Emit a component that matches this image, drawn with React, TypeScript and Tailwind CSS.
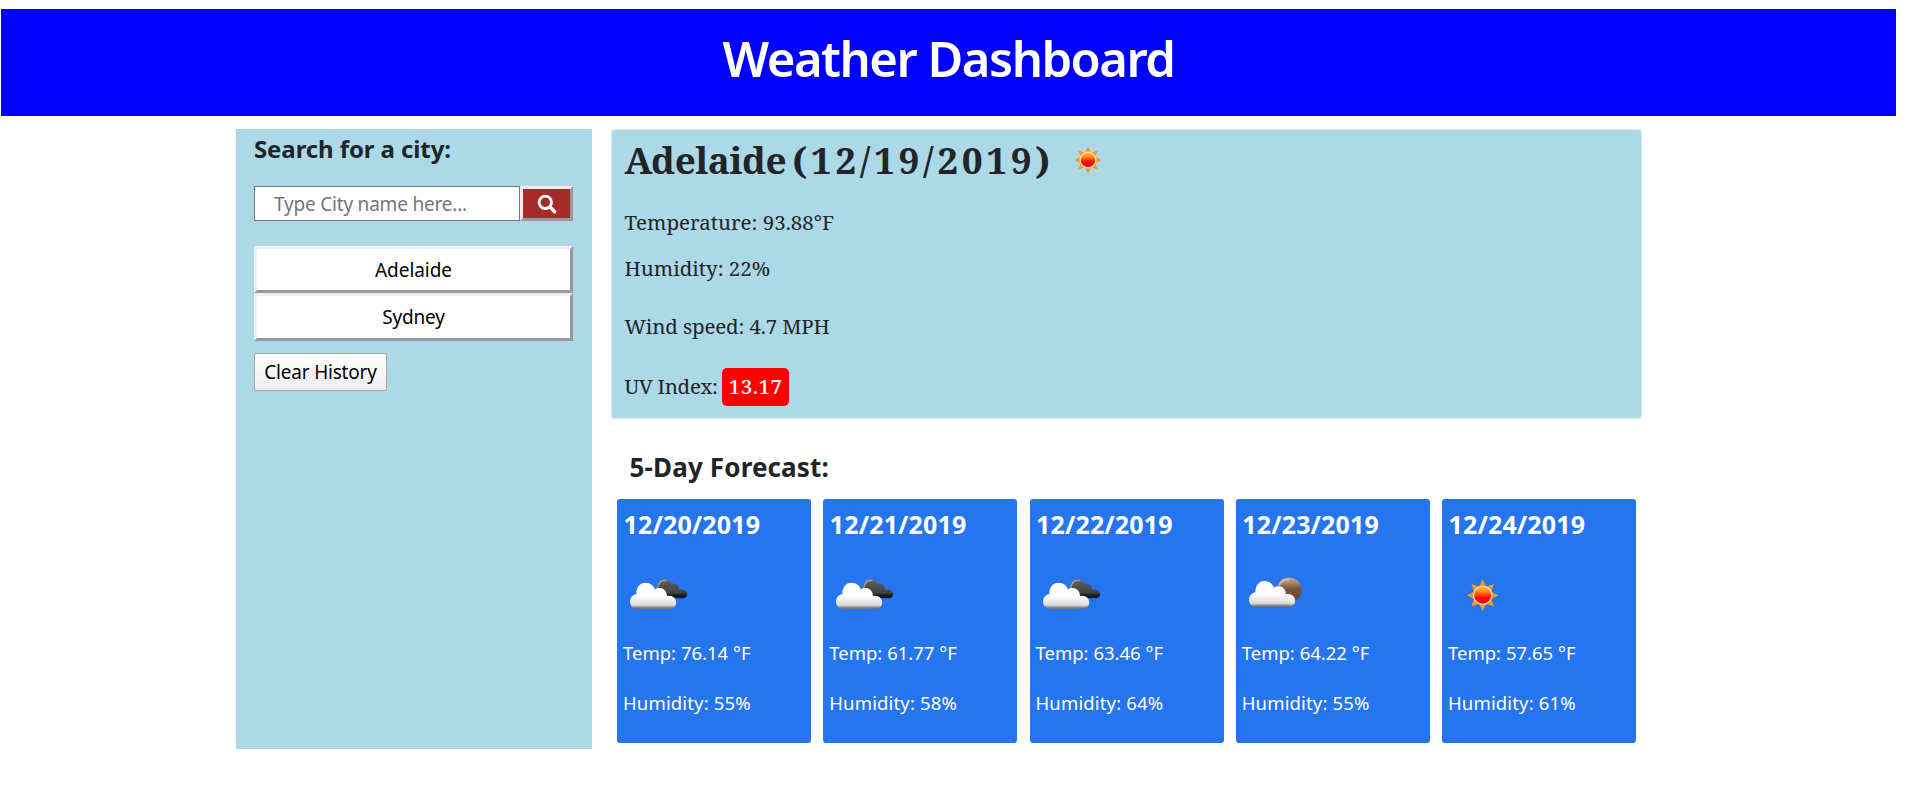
type Sky = 'clouds' | 'partly' | 'sun';

const history = [
  { name: 'Adelaide', box: 'h-[47px] pt-px tracking-[-0.05px]' },
  { name: 'Sydney', box: 'h-[48px] pt-px tracking-[-0.2px]' },
];

const forecast: { date: string; sky: Sky; temp: string; humidity: string }[] = [
  { date: '12/20/2019', sky: 'clouds', temp: '76.14', humidity: '55' },
  { date: '12/21/2019', sky: 'clouds', temp: '61.77', humidity: '58' },
  { date: '12/22/2019', sky: 'clouds', temp: '63.46', humidity: '64' },
  { date: '12/23/2019', sky: 'partly', temp: '64.22', humidity: '55' },
  { date: '12/24/2019', sky: 'sun', temp: '57.65', humidity: '61' },
];

function SunShape({ id }: { id: string }) {
  return (
    <>
      <defs>
        <linearGradient id={id} x1="0" y1="0" x2="0" y2="1">
          <stop offset="0" stopColor="#ffc04a" />
          <stop offset="0.25" stopColor="#ff9a1a" />
          <stop offset="0.5" stopColor="#ff3b00" />
          <stop offset="0.62" stopColor="#ff0800" />
          <stop offset="1" stopColor="#f50000" />
        </linearGradient>
      </defs>
      {[0, 45, 90, 135, 180, 225, 270, 315].map((a) => (
        <path key={a} d="M-3.6 -8.5 L0 -16 L3.6 -8.5Z" fill="#f39a1c" transform={`rotate(${a})`} />
      ))}
      <circle r="9.2" fill={`url(#${id})`} stroke="#fbdcb4" strokeWidth="1.4" />
    </>
  );
}

function FrontCloud({ id }: { id: string }) {
  return (
    <>
      <defs>
        <linearGradient id={id} gradientUnits="userSpaceOnUse" x1="0" y1="13" x2="0" y2="39.3">
          <stop offset="0" stopColor="#ffffff" />
          <stop offset="0.5" stopColor="#fdfdfd" />
          <stop offset="0.84" stopColor="#dcdcdc" />
          <stop offset="0.92" stopColor="#8d8f93" />
          <stop offset="1" stopColor="#50617f" />
        </linearGradient>
      </defs>
      <path
        d="M14 39.2 C10 39.2 7 35.9 7 31.6 C7 27.7 9.7 24.6 13.4 24 C13.1 17.6 16.8 12.8 22.6 12.8 C27.4 12.8 30.6 15.6 31.8 19.4 C33 18.4 34.6 18 36.4 18 C40.8 18 44 21.4 43.9 26 C49.4 24.9 53.2 28.2 53.2 32.4 C53.2 36.2 50.4 39.2 46.6 39.2Z"
        fill={`url(#${id})`}
      />
    </>
  );
}

function SkyIcon({ sky, id }: { sky: Sky; id: string }) {
  return (
    <svg width="70" height="50" viewBox="0 0 70 50" className="block">
      {sky === 'sun' && (
        <g transform="translate(34.7 25.3)">
          <SunShape id={`${id}-sun`} />
        </g>
      )}
      {sky === 'clouds' && (
        <>
          <defs>
            <linearGradient id={`${id}-back`} gradientUnits="userSpaceOnUse" x1="0" y1="9" x2="0" y2="28.5">
              <stop offset="0" stopColor="#707070" />
              <stop offset="0.25" stopColor="#555555" />
              <stop offset="0.7" stopColor="#424242" />
              <stop offset="0.85" stopColor="#161616" />
              <stop offset="1" stopColor="#111d35" />
            </linearGradient>
          </defs>
          <path
            d="M33.5 22 C33 14.6 36.6 9.2 42 9.2 C45.4 9.2 47.6 11 48.6 13.8 C52.6 12.8 56 15.6 56 19.6 C60.6 18.8 64.2 20.8 64.2 24 C64.2 26.6 62.4 28.3 59.8 28.3 L42 28.3Z"
            fill={`url(#${id}-back)`}
          />
          <path d="M34.6 18 C35.6 12.6 39 9.8 43.6 10.4" fill="none" stroke="#a5a5a5" strokeWidth="1.6" opacity="0.9" />
          <FrontCloud id={`${id}-front`} />
        </>
      )}
      {sky === 'partly' && (
        <>
          <defs>
            <linearGradient id={`${id}-disc`} x1="0" y1="0" x2="0" y2="1">
              <stop offset="0" stopColor="#c2a68f" />
              <stop offset="0.2" stopColor="#ab8a70" />
              <stop offset="0.45" stopColor="#76553f" />
              <stop offset="1" stopColor="#60452f" />
            </linearGradient>
          </defs>
          <circle cx="47" cy="20.2" r="12.6" fill={`url(#${id}-disc)`} />
          <path d="M37 15.5 C39.5 10.8 43.4 9.4 47.4 9.6" fill="none" stroke="#dccbbd" strokeWidth="1.5" opacity="0.8" />
          <g transform="translate(0 -1.8)">
            <FrontCloud id={`${id}-front`} />
          </g>
        </>
      )}
    </svg>
  );
}

export default function App() {
  return (
    <div className="min-h-[811px] bg-white pt-[9px] font-['Noto_Sans','Open_Sans',sans-serif] text-[#212529]">
      <header className="ml-px h-[107px] w-[1895px] bg-[#0000ff] text-center">
        <h1 className="text-[49px] font-semibold leading-[99px] tracking-[-1.5px] text-white">Weather Dashboard</h1>
      </header>

      <div className="mt-[13px] ml-[236px] flex items-start">
        <aside className="h-[620px] w-[356px] bg-[#add8e6] pr-[19px] pl-[18px]">
          <h2 className="text-[24px] font-bold leading-[39px] tracking-[-0.1px]">Search for a city:</h2>
          <form className="mt-[18px] flex h-[35px]" onSubmit={(e) => e.preventDefault()}>
            <input
              type="text"
              placeholder="Type City name here..."
              className="h-full w-[266px] border border-[#767676] bg-white pl-[19px] text-[19px] tracking-[-0.2px] outline-none placeholder:text-[#757575]"
            />
            <button
              type="submit"
              aria-label="Search"
              className="flex h-full w-[53px] items-center justify-center border-[3px] border-t-[#efefef] border-r-[#999999] border-b-[#999999] border-l-[#efefef] bg-[#a52a2a]"
            >
              <svg width="20" height="20" viewBox="0 0 20 20" fill="none" stroke="#ffffff">
                <circle cx="8.3" cy="8.3" r="6.2" strokeWidth="2.9" />
                <path d="M13 13 L17.6 17.7" strokeWidth="3.4" strokeLinecap="round" />
              </svg>
            </button>
          </form>

          <div className="mt-[25px] flex flex-col">
            {history.map((city) => (
              <button
                key={city.name}
                className={`border-[3px] border-t-[#efefef] border-r-[#999999] border-b-[#999999] border-l-[#efefef] bg-white text-[19px] text-black ${city.box}`}
              >
                {city.name}
              </button>
            ))}
          </div>
          <button className="mt-3 h-[38px] w-[133px] rounded-[2px] border border-[#a6a6a6] bg-linear-to-b from-white to-[#eeeeee] pt-px text-[19px] tracking-[-0.2px] text-black">
            Clear History
          </button>
        </aside>

        <main className="ml-[19px] w-[1031px]">
          <section className="h-[290px] rounded-[3px] border border-[#e3ebee] bg-[#add8e6] pl-[12.5px] font-['Noto_Serif','DejaVu_Serif_Condensed',serif]">
            <h2 className="flex h-[59px] items-center text-[37px] font-bold leading-[59px]">
              <span className="tracking-[-0.5px]">Adelaide</span>
              <span className="ml-[6px] tracking-[3.6px]">(12/19/2019)</span>
              <svg width="28" height="28" viewBox="-16.5 -16.5 33 33" className="ml-[20px]">
                <SunShape id="today" />
              </svg>
            </h2>
            <div className="text-[20.5px] leading-[30px]">
              <p className="mt-[18px]">Temperature: 93.88°F</p>
              <p className="mt-[16px]">Humidity: 22%</p>
              <p className="mt-[28px] tracking-[-0.15px]">Wind speed: 4.7 MPH</p>
              <p className="mt-[27px] flex h-[38px] leading-[36px]">
                <span className="tracking-[-0.3px]">UV Index:</span>
                <span className="ml-[4.5px] h-[38px] w-[67px] rounded-[5px] bg-[#ff0000] text-center font-medium tracking-[0.5px] text-white">
                  13.17
                </span>
              </p>
            </div>
          </section>

          <h3 className="mt-[27px] pl-[18.5px] text-[26px] font-bold leading-[42px] tracking-[0.15px]">5-Day Forecast:</h3>
          <div className="mt-[11px] ml-[6px] grid w-[1019px] grid-cols-5 gap-x-[12.25px]">
            {forecast.map((day, i) => (
              <article key={day.date} className="h-[244px] rounded-[3px] bg-[#2575ee] pl-[6px] text-white">
                <h4 className="pl-[0.5px] text-[25px] font-bold leading-[51px] tracking-[0.15px]">{day.date}</h4>
                <div className="mt-[20px] h-[50px]">
                  <SkyIcon sky={day.sky} id={`day${i}`} />
                </div>
                <p className="mt-[19px] text-[18.5px] leading-[28px]">Temp: {day.temp} °F</p>
                <p className="mt-[22px] text-[18.5px] leading-[28px] tracking-[0.15px]">Humidity: {day.humidity}%</p>
              </article>
            ))}
          </div>
        </main>
      </div>
    </div>
  );
}
